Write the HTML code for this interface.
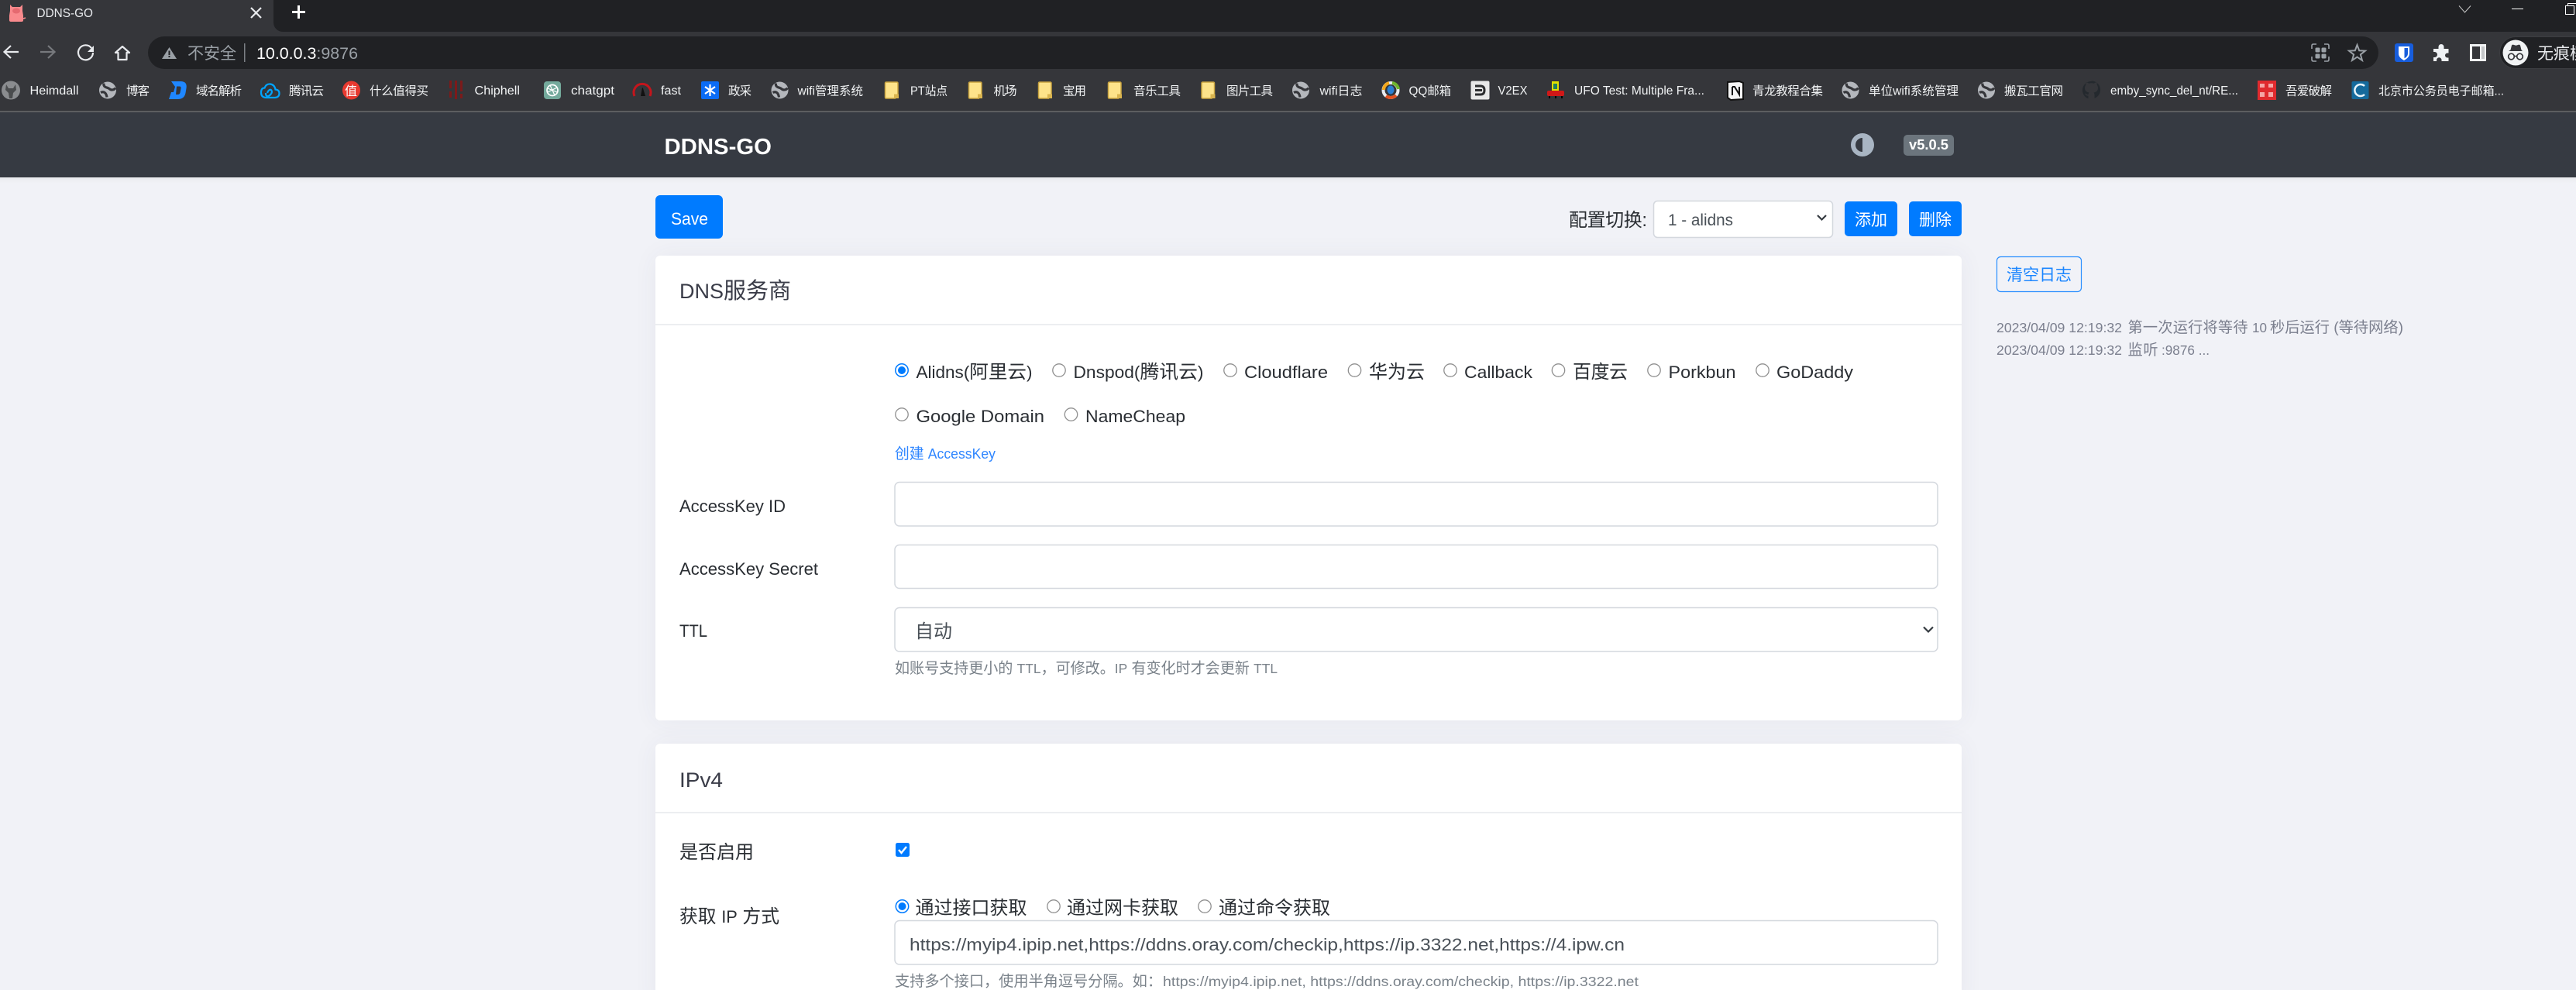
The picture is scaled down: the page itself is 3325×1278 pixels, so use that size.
<!DOCTYPE html>
<html lang="zh-CN"><head><meta charset="utf-8"><title>DDNS-GO</title>
<style>
html,body{margin:0;padding:0;width:3325px;height:1278px;overflow:hidden;background:#f1f2f7}
body{position:relative;font-family:"Liberation Sans","Noto Sans CJK SC",sans-serif}
.a{position:absolute}
svg{position:absolute;left:0;top:0}
text{font-family:"Liberation Sans","Noto Sans CJK SC",sans-serif;white-space:pre}
.b{font-size:15.5px;fill:#f1f3f4}
.m{font-size:24px;fill:#2a2e33}
.l{font-size:22px;fill:#2a2e33}
.h{font-size:19.2px;fill:#7a828a}
.f{fill:#fff;stroke:#d4d8de;stroke-width:1.5}
.rd{fill:#fff;stroke:#8f8f8f;stroke-width:1.3}
</style></head><body>
<div class="a" style="left:0;top:0;width:3325px;height:41px;background:#202124"></div>
<div class="a" style="left:0;top:0;width:353px;height:41px;background:#35363a"></div>
<div class="a" style="left:353px;top:29px;width:12px;height:12px;background:#35363a"></div>
<div class="a" style="left:353px;top:29px;width:12px;height:12px;background:#202124;border-bottom-left-radius:12px"></div>
<div class="a" style="left:0;top:41px;width:3325px;height:102px;background:#35363a"></div>
<div class="a" style="left:0;top:143px;width:3325px;height:2px;background:#5c5d60"></div>
<div class="a" style="left:0;top:145px;width:3325px;height:84px;background:#363a42"></div>
<div class="a" style="left:0;top:229px;width:3325px;height:8px;background:linear-gradient(#e9eaee,#f1f2f7)"></div>
<div class="a" style="left:846px;top:330px;width:1686px;height:600px;background:#fff;border-radius:6px;box-shadow:0 0 32px rgba(60,60,100,.06)"></div>
<div class="a" style="left:846px;top:960px;width:1686px;height:340px;background:#fff;border-radius:6px;box-shadow:0 0 32px rgba(60,60,100,.06)"></div>

<svg width="3325" height="1278" viewBox="0 0 3325 1278" xmlns="http://www.w3.org/2000/svg">
<defs>
<g id="globe"><circle r="11" fill="#b4b7bc"/><path d="M-5-9C-6-3 0-4 2-2 5 1 9-1 10-3M-9 3C-5 1-2 3-1 9" fill="none" stroke="#35363a" stroke-width="3.2"/></g>
<g id="folder"><path d="M0 1.5Q0 0 1.5 0H15Q16.5 0 16.5 1.5V16L13 21H1.5Q0 21 0 19.5Z" fill="#fde38a" stroke="#c9a440" stroke-width="1.5"/><path d="M11.5 21V15.5H17.5V21Z" fill="#d9b44e"/></g>
<g id="rd"><circle r="8.2" class="rd"/></g>
</defs>

<!-- tab -->
<path d="M13 6l3 3h10l3-3v8l1 6v6q0 2-2 2H14q-2 0-2-2v-6l1-6z" fill="#f98a8d"/>
<ellipse cx="21" cy="14" rx="5" ry="3.5" fill="#e56a70"/>
<path d="M30 24l3-1" stroke="#f98a8d" stroke-width="1.5"/>
<text x="47.5" y="22" font-size="16" fill="#e8eaed" textLength="72.5" lengthAdjust="spacingAndGlyphs">DDNS-GO</text>
<path d="M324 10l13 13M337 10l-13 13" stroke="#e8eaed" stroke-width="2.2"/>
<path d="M385.5 7v17M377 15.5h17" stroke="#fff" stroke-width="3"/>
<!-- window controls -->
<path d="M3174 7.5l7.5 8.5 7.5-8.5" fill="none" stroke="#c8c8c8" stroke-width="1"/>
<path d="M3242 11.5h15" stroke="#fff" stroke-width="1"/>
<rect x="3311.5" y="7.5" width="11" height="11" fill="none" stroke="#fff"/><path d="M3314.5 7V4.500H3325" fill="none" stroke="#fff"/>
<!-- toolbar -->
<path d="M24 67H6M14 59l-8.500 8 8.500 8" fill="none" stroke="#e8eaed" stroke-width="2.2"/>
<path d="M52 67h18M62 59l8.500 8-8.500 8" fill="none" stroke="#77797d" stroke-width="2.2"/>
<path d="M118 62a9.5 9.5 0 1 0 2 6" fill="none" stroke="#e8eaed" stroke-width="2.2"/><path d="M121 59v8h-8z" fill="#e8eaed"/>
<path d="M158 60L149 68H152.5V77H163.5V68H167Z" fill="none" stroke="#e8eaed" stroke-width="2.2" stroke-linejoin="round"/>
<rect x="191" y="47" width="2879" height="42" rx="21" fill="#202124"/>
<path d="M218.5 61L228 76H209Z" fill="#9aa0a6"/><path d="M218.5 65.5v5.500M218.5 72v2" stroke="#202124" stroke-width="2"/>
<text x="242" y="76" font-size="21" fill="#9aa0a6" textLength="63">不安全</text>
<rect x="315" y="56" width="1.5" height="24" fill="#7b7f84"/>
<text x="331" y="76" font-size="21.5" fill="#fff" textLength="131" lengthAdjust="spacingAndGlyphs">10.0.0.3<tspan fill="#9aa0a6">:9876</tspan></text>
<path d="M2984 63v-4q0-2 2-2h4M3000 57h4q2 0 2 2v4M3006 73v4q0 2-2 2h-4M2990 79h-4q-2 0-2-2v-4" fill="none" stroke="#9aa0a6" stroke-width="1.6"/>
<rect x="2988.5" y="61.5" width="6" height="6" rx="1.5" fill="#9aa0a6"/><rect x="2996.5" y="61.5" width="6" height="6" rx="1.5" fill="#9aa0a6"/><rect x="2988.5" y="69.5" width="6" height="6" rx="1.5" fill="#9aa0a6"/><rect x="2996.5" y="69.5" width="6" height="6" rx="1.5" fill="#9aa0a6"/>
<path transform="translate(3042.5 69)" d="M0-11L2.7-3.72 10.46-3.4 4.37 1.42 6.47 8.9 0 4.6-6.47 8.9-4.37 1.42-10.46-3.4-2.7-3.72Z" fill="none" stroke="#9aa0a6" stroke-width="2"/>
<rect x="3091" y="56" width="24" height="24" rx="3" fill="#175ddc"/>
<path d="M3096 60h14v9c0 5-4 7-7 9-3-2-7-4-7-9z" fill="#fff"/><path d="M3103.5 62h4.500v7c0 3-2 5-4.500 6.300z" fill="#175ddc"/>
<path d="M3151 57a3.5 3.5 0 0 1 3.5 3.5V63h6v5.500h-1.500a3 3 0 0 0 0 6h1.500V79h-9v-1.500a3.2 3.2 0 0 0-6.400 0V79H3141v-5h1.500a3.5 3.5 0 0 0 0-7H3141v-4h6.500v-2.500A3.5 3.5 0 0 1 3151 57z" fill="#eef1f4"/>
<rect x="3188" y="57" width="21" height="22" fill="#f1f3f4"/><rect x="3191" y="60" width="10" height="16" fill="#35363a"/><rect x="3203" y="60" width="4" height="16" fill="#c4c6c8"/>
<rect x="3226.5" y="47.5" width="200" height="41" rx="20.5" fill="#202124" stroke="#3c3d41"/>
<circle cx="3247" cy="68" r="16.5" fill="#f1f3f4"/>
<path d="M3238 66h18l-1.500-1.500-1.500-6q-1-1.500-3-.5l-2.500.8-2.500-.8q-2-1-3 .5l-1.500 6z" fill="#35363a"/>
<circle cx="3241.5" cy="73" r="3.8" fill="none" stroke="#35363a" stroke-width="1.7"/><circle cx="3252.5" cy="73" r="3.8" fill="none" stroke="#35363a" stroke-width="1.7"/><path d="M3245 72.5h4" stroke="#35363a" stroke-width="1.5"/>
<text x="3275" y="76" font-size="21" fill="#e8eaed">无痕模式</text>

<!-- bookmarks -->
<circle cx="14" cy="116.5" r="12" fill="#8a8c8f"/><path d="M8 109l3 5h6l3-5 1 7-4 4-1 7h-4l-1-7-4-4z" fill="#4a4c4e"/>
<text x="38.5" y="122" class="b" textLength="63" lengthAdjust="spacingAndGlyphs">Heimdall</text>
<use href="#globe" x="139" y="116.5"/><text x="163" y="122.5" class="b" textLength="30">博客</text>
<path d="M221 105h12q9 0 7.500 9l-1 6q-1.500 8-10 8H218l3-9h3l2-7z" fill="#1f87ff"/><path d="M228 111.5h4q2 0 1.500 3l-1 5q-.5 2.500-3 2.500h-2.500z" fill="#35363a"/>
<text x="253" y="122.5" class="b" textLength="59">域名解析</text>
<path d="M343 126h12q5.500-.5 5.500-5.500 0-4.500-5-5-1-6-6.500-7-5.500-.5-7.500 5-4.500 0-4.500 6 0 6 6 6.500zM345 120c3-8 8-3 5 1-2 3-7 6-7-1" fill="none" stroke="#00a4ff" stroke-width="2.2"/>
<text x="373" y="122.5" class="b" textLength="45">腾讯云</text>
<ellipse cx="453.5" cy="116.5" rx="11.5" ry="12" fill="#e83a30"/><text x="445" y="123" font-size="16" fill="#fff" textLength="17">值</text>
<text x="477" y="122.5" class="b" textLength="76">什么值得买</text>
<path d="M580 104h3v10h-3zM587 104h3v24h-3zM594 104h3v14h-3zM580 118h3v8h-3zM594 121h3v6h-3z" fill="#7c1a1a"/>
<text x="612.5" y="122" class="b" textLength="58.5" lengthAdjust="spacingAndGlyphs">Chiphell</text>
<rect x="702" y="105" width="22" height="23" rx="4" fill="#74aa9c"/><circle cx="713" cy="116.5" r="7" fill="none" stroke="#fff" stroke-width="1.7"/><path d="M710 110l6 13M707 119l12-6M707 114l12 5" stroke="#fff" stroke-width="1.2"/>
<text x="737" y="122" class="b" textLength="56" lengthAdjust="spacingAndGlyphs">chatgpt</text>
<path d="M819 124a11 11 0 1 1 20 0" fill="none" stroke="#c4151c" stroke-width="3"/><path d="M827 124l2-11 1 1 3 10z" fill="#111"/>
<text x="853" y="122" class="b" textLength="26" lengthAdjust="spacingAndGlyphs">fast</text>
<rect x="905" y="105" width="23" height="23" rx="2" fill="#0b6cf5"/><path d="M916.5 109v15M910 112l13 9M923 112l-13 9" stroke="#fff" stroke-width="2.2"/>
<text x="940" y="122.5" class="b" textLength="30">政采</text>
<use href="#globe" x="1006.5" y="116.5"/><text x="1029.5" y="122.5" class="b" textLength="84.5" lengthAdjust="spacingAndGlyphs">wifi管理系统</text>
<use href="#folder" x="1142.5" y="106"/><text x="1175" y="122.5" class="b" textLength="48" lengthAdjust="spacingAndGlyphs">PT站点</text>
<use href="#folder" x="1250.5" y="106"/><text x="1282.5" y="122.5" class="b" textLength="30">机场</text>
<use href="#folder" x="1340.5" y="106"/><text x="1372" y="122.5" class="b" textLength="30">宝用</text>
<use href="#folder" x="1430.5" y="106"/><text x="1463" y="122.5" class="b" textLength="61">音乐工具</text>
<use href="#folder" x="1551" y="106"/><text x="1583" y="122.5" class="b" textLength="60">图片工具</text>
<use href="#globe" x="1679" y="116.5"/><text x="1703.5" y="122.5" class="b" textLength="55" lengthAdjust="spacingAndGlyphs">wifi日志</text>
<circle cx="1795" cy="116.5" r="9.5" fill="none" stroke="#e8eaed" stroke-width="4"/><path d="M1786 116a9.5 9.5 0 0 1 7-9" fill="none" stroke="#f4a81c" stroke-width="4"/><path d="M1797 107a9.5 9.5 0 0 1 8 8" fill="none" stroke="#6fb52c" stroke-width="4"/><path d="M1802 123a10 10 0 0 1-13 1" fill="none" stroke="#e2501f" stroke-width="4"/><ellipse cx="1795" cy="116" rx="4.5" ry="5.5" fill="#2a7fd3"/>
<text x="1818.5" y="122.5" class="b" textLength="54.5" lengthAdjust="spacingAndGlyphs">QQ邮箱</text>
<rect x="1898.5" y="104.5" width="24" height="24" rx="2" fill="#e8e8e8"/><path d="M1904 111h7q5 0 5 5.500t-5 5.500h-7M1904 116.5h9" fill="none" stroke="#2d2e30" stroke-width="3"/>
<text x="1933.5" y="122" class="b" textLength="38" lengthAdjust="spacingAndGlyphs">V2EX</text>
<rect x="2003" y="105" width="9" height="14" fill="#e0e000"/><rect x="2005" y="108" width="5" height="7" fill="#208060"/><rect x="1997" y="117" width="22" height="7" rx="2" fill="#d01818"/><path d="M2000 124v3M2008 124v3M2016 124v3" stroke="#000" stroke-width="2"/>
<text x="2032" y="122" class="b" textLength="168" lengthAdjust="spacingAndGlyphs">UFO Test: Multiple Fra...</text>
<path d="M2230 106l15-1 5 2v21l-16 1-4-3z" fill="#f5f5f5" stroke="#111" stroke-width="2"/><path d="M2236 112l3 0 6 10v-10M2236 123v-11" fill="none" stroke="#111" stroke-width="2"/>
<text x="2262" y="122.5" class="b" textLength="91">青龙教程合集</text>
<use href="#globe" x="2388.5" y="116.5"/><text x="2412" y="122.5" class="b" textLength="116" lengthAdjust="spacingAndGlyphs">单位wifi系统管理</text>
<use href="#globe" x="2564" y="116.5"/><text x="2587" y="122.5" class="b" textLength="76">搬瓦工官网</text>
<path d="M2699.5 105a11.5 11.5 0 0 0-4 22.300v-3.800c-3 .5-4-1.500-4.500-3 2 .5 3 2 4.500 1.500 0-1 .5-2 1-2.500-3-.5-5.500-2-5.500-6 0-1.500.5-2.800 1.400-3.800-.2-1-.1-2.500.3-3.500 1.500 0 2.800 1 3.500 1.500a12 12 0 0 1 6.600 0c.7-.5 2-1.500 3.500-1.500.4 1 .5 2.500.3 3.500.9 1 1.400 2.300 1.400 3.800 0 4-2.500 5.500-5.500 6 .6.6 1 1.500 1 3v4.300a11.5 11.5 0 0 0-4-22.300z" fill="#24292e"/>
<text x="2724" y="122" class="b" textLength="165" lengthAdjust="spacingAndGlyphs">emby_sync_del_nt/RE...</text>
<rect x="2914" y="104" width="24" height="25" fill="#e02a2e"/><path d="M2917 108h6v5h-6zM2928 108h6v5h-6zM2917 119h6v6h-6zM2928 119h6v6h-6z" fill="#f5a5a5"/>
<text x="2950" y="122.5" class="b" textLength="60">吾爱破解</text>
<rect x="3035.5" y="105" width="22" height="23" rx="2" fill="#156a9c"/><path d="M3052 111a7.5 7.5 0 1 0 0 11" fill="none" stroke="#e8f4fa" stroke-width="2.5"/>
<text x="3070" y="122.5" class="b" textLength="162" lengthAdjust="spacingAndGlyphs">北京市公务员电子邮箱...</text>

<!-- navbar -->
<text x="857.5" y="199" font-size="29" font-weight="700" fill="#fff" textLength="138.5" lengthAdjust="spacingAndGlyphs">DDNS-GO</text>
<circle cx="2404" cy="187" r="15" fill="#a9b5c3"/><path d="M2404 178a9 9 0 0 0 0 18z" fill="#363a42"/>
<rect x="2457" y="174" width="65" height="27" rx="5" fill="#6c757d"/>
<text x="2464" y="193" font-size="18" font-weight="700" fill="#fff" textLength="51" lengthAdjust="spacingAndGlyphs">v5.0.5</text>

<!-- top actions -->
<rect x="846" y="252" width="87" height="56" rx="6" fill="#007bff"/>
<text x="866" y="290" font-size="22" fill="#fff" textLength="48" lengthAdjust="spacingAndGlyphs">Save</text>
<text x="2025" y="292" font-size="24" fill="#2a2e33" textLength="101">配置切换:</text>
<rect x="2134.5" y="259.5" width="231" height="47" rx="5" class="f"/>
<text x="2153" y="291" font-size="21" fill="#495057" textLength="84" lengthAdjust="spacingAndGlyphs">1 - alidns</text>
<path d="M2346 278l5.500 5.500 5.500-5.500" fill="none" stroke="#343a40" stroke-width="2.2"/>
<rect x="2381" y="260" width="68" height="45" rx="5" fill="#007bff"/><text x="2394" y="291" font-size="21" fill="#fff" textLength="42">添加</text>
<rect x="2464" y="260" width="68" height="45" rx="5" fill="#007bff"/><text x="2477" y="291" font-size="21" fill="#fff" textLength="42">删除</text>

<!-- card 1 -->
<rect x="846" y="418" width="1686" height="2" fill="#eceef1"/>
<text x="877" y="385" font-size="27" fill="#3a3c48" textLength="144" lengthAdjust="spacingAndGlyphs">DNS<tspan font-size="29">服务商</tspan></text>

<circle cx="1164" cy="478" r="8.2" fill="#fff" stroke="#007bff" stroke-width="1.5"/><circle cx="1164" cy="478" r="5" fill="#007bff"/>
<text x="1182.5" y="488" class="l" textLength="150" lengthAdjust="spacingAndGlyphs">Alidns(<tspan font-size="24">阿里云</tspan>)</text>
<use href="#rd" x="1367" y="478"/><text x="1385.5" y="488" class="l" textLength="168" lengthAdjust="spacingAndGlyphs">Dnspod(<tspan font-size="24">腾讯云</tspan>)</text>
<use href="#rd" x="1588" y="478"/><text x="1606" y="488" class="l" textLength="108" lengthAdjust="spacingAndGlyphs">Cloudflare</text>
<use href="#rd" x="1748.5" y="478"/><text x="1767" y="488" class="m" textLength="72">华为云</text>
<use href="#rd" x="1872" y="478"/><text x="1890" y="488" class="l" textLength="88" lengthAdjust="spacingAndGlyphs">Callback</text>
<use href="#rd" x="2011.5" y="478"/><text x="2030" y="488" class="m" textLength="71">百度云</text>
<use href="#rd" x="2135" y="478"/><text x="2153.5" y="488" class="l" textLength="87" lengthAdjust="spacingAndGlyphs">Porkbun</text>
<use href="#rd" x="2275" y="478"/><text x="2293" y="488" class="l" textLength="99" lengthAdjust="spacingAndGlyphs">GoDaddy</text>
<use href="#rd" x="1164" y="535"/><text x="1182.5" y="545" class="l" textLength="165.5" lengthAdjust="spacingAndGlyphs">Google Domain</text>
<use href="#rd" x="1382.5" y="535"/><text x="1401" y="545" class="l" textLength="129" lengthAdjust="spacingAndGlyphs">NameCheap</text>
<text x="1155" y="592" font-size="19.2" fill="#2f86ff" textLength="130" lengthAdjust="spacingAndGlyphs">创建 <tspan font-size="18">AccessKey</tspan></text>

<text x="877" y="661" class="l" textLength="137" lengthAdjust="spacingAndGlyphs">AccessKey ID</text>
<rect x="1155" y="622.5" width="1346" height="56.5" rx="6" class="f"/>
<text x="877" y="742" class="l" textLength="179" lengthAdjust="spacingAndGlyphs">AccessKey Secret</text>
<rect x="1155" y="703.5" width="1346" height="56" rx="6" class="f"/>
<text x="877" y="822" class="l" textLength="36" lengthAdjust="spacingAndGlyphs">TTL</text>
<rect x="1155" y="784.5" width="1346" height="56.5" rx="6" class="f"/>
<text x="1181" y="823" font-size="24" fill="#495057" textLength="48">自动</text>
<path d="M2483 809.5l6 6 6-6" fill="none" stroke="#343a40" stroke-width="2.2"/>
<text x="1155" y="869" class="h" textLength="494" lengthAdjust="spacingAndGlyphs">如账号支持更小的 <tspan font-size="17.5">TTL</tspan>，可修改。<tspan font-size="17.5">IP</tspan> 有变化时才会更新 <tspan font-size="17.5">TTL</tspan></text>

<!-- card 2 -->
<text x="877" y="1016" font-size="27" fill="#3a3c48" textLength="56" lengthAdjust="spacingAndGlyphs">IPv4</text>
<rect x="846" y="1048" width="1686" height="2" fill="#eceef1"/>
<text x="877" y="1108" class="m" textLength="96">是否启用</text>
<rect x="1156" y="1088" width="18" height="18" rx="2.5" fill="#007bff"/><path d="M1160 1097l3.500 4 6.500-8" fill="none" stroke="#fff" stroke-width="2.4"/>
<text x="877" y="1191" class="m" textLength="129" lengthAdjust="spacingAndGlyphs">获取 <tspan font-size="22">IP</tspan> 方式</text>
<circle cx="1164.5" cy="1170" r="8.2" fill="#fff" stroke="#007bff" stroke-width="1.5"/><circle cx="1164.5" cy="1170" r="5" fill="#007bff"/>
<text x="1181.5" y="1180" class="m" textLength="144">通过接口获取</text>
<use href="#rd" x="1360" y="1170"/><text x="1377" y="1180" class="m" textLength="144">通过网卡获取</text>
<use href="#rd" x="1555" y="1170"/><text x="1573" y="1180" class="m" textLength="144">通过命令获取</text>
<rect x="1155" y="1188.5" width="1346" height="56.5" rx="6" class="f"/>
<text x="1174" y="1227" font-size="22" fill="#495057" textLength="923" lengthAdjust="spacingAndGlyphs">https://myip4.ipip.net,https://ddns.oray.com/checkip,https://ip.3322.net,https://4.ipw.cn</text>
<text x="1155" y="1273" class="h" textLength="345">支持多个接口，使用半角逗号分隔。如：</text>
<text x="1501" y="1273" font-size="17.5" fill="#7a828a" textLength="614" lengthAdjust="spacingAndGlyphs">https://myip4.ipip.net, https://ddns.oray.com/checkip, https://ip.3322.net</text>

<!-- log -->
<rect x="2577.5" y="331.5" width="109" height="45" rx="5" fill="none" stroke="#2b8fff" stroke-width="1.2"/>
<text x="2590" y="362" font-size="21" fill="#1a85ff" textLength="84">清空日志</text>
<text x="2577" y="429" font-size="17.6" fill="#7b7f8e" textLength="162" lengthAdjust="spacingAndGlyphs">2023/04/09 12:19:32</text>
<text x="2746.5" y="429" font-size="19.2" fill="#7b7f8e" textLength="155">第一次运行将等待</text>
<text x="2907" y="429" font-size="17.6" fill="#7b7f8e" textLength="19" lengthAdjust="spacingAndGlyphs">10</text>
<text x="2930" y="429" font-size="19.2" fill="#7b7f8e" textLength="172" lengthAdjust="spacingAndGlyphs">秒后运行 (等待网络)</text>
<text x="2577" y="458" font-size="17.6" fill="#7b7f8e" textLength="162" lengthAdjust="spacingAndGlyphs">2023/04/09 12:19:32</text>
<text x="2746.5" y="458" font-size="19.2" fill="#7b7f8e" textLength="39">监听</text>
<text x="2790" y="458" font-size="17.6" fill="#7b7f8e" textLength="62" lengthAdjust="spacingAndGlyphs">:9876 ...</text>
</svg>
</body></html>
